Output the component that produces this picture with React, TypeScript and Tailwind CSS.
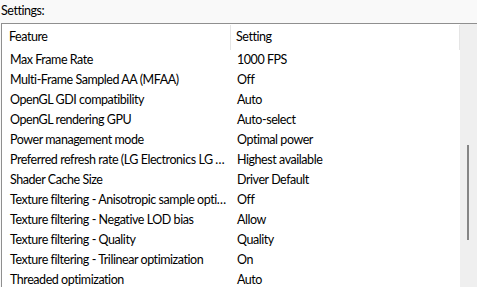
import React from 'react';

const rows: [string, string][] = [
  ['Max Frame Rate', '1000 FPS'],
  ['Multi-Frame Sampled AA (MFAA)', 'Off'],
  ['OpenGL GDI compatibility', 'Auto'],
  ['OpenGL rendering GPU', 'Auto-select'],
  ['Power management mode', 'Optimal power'],
  ['Preferred refresh rate (LG Electronics LG …', 'Highest available'],
  ['Shader Cache Size', 'Driver Default'],
  ['Texture filtering - Anisotropic sample opti…', 'Off'],
  ['Texture filtering - Negative LOD bias', 'Allow'],
  ['Texture filtering - Quality', 'Quality'],
  ['Texture filtering - Trilinear optimization', 'On'],
  ['Threaded optimization', 'Auto'],
];

const App: React.FC = () => {
  return (
    <div className="w-[477px] h-[287px] overflow-hidden bg-[#f9f9f9] text-[12.5px] tracking-[-0.45px] text-black font-['Lato',sans-serif]">
      <div className="h-[23px] pl-[1px] pt-[2px] leading-[18px]">Settings:</div>
      <div className="flex ml-[1px] h-[264px] border-l border-t border-[#8f8f8f] bg-white">
        <div className="flex-1 pt-[1px]">
          {/* header */}
          <div className="flex h-[25px] items-center">
            <div className="w-[229px] h-full pl-[7px] flex items-center border-r border-[#e5e5e5]">Feature</div>
            <div className="flex-1 h-full pl-[5px] flex items-center border-r border-[#e5e5e5]">Setting</div>
          </div>
          {rows.map(([f, s]) => (
            <div key={f} className="flex h-[20px] items-center">
              <div className="w-[229px] pl-[8px] whitespace-nowrap overflow-hidden">{f}</div>
              <div className="flex-1 pl-[6px] whitespace-nowrap">{s}</div>
            </div>
          ))}
        </div>
        <div className="w-[17px] bg-[#efefef] relative">
          <div className="absolute left-[7px] top-[121px] w-[2px] h-[95px] bg-[#858585]" />
        </div>
      </div>
    </div>
  );
};

export default App;
